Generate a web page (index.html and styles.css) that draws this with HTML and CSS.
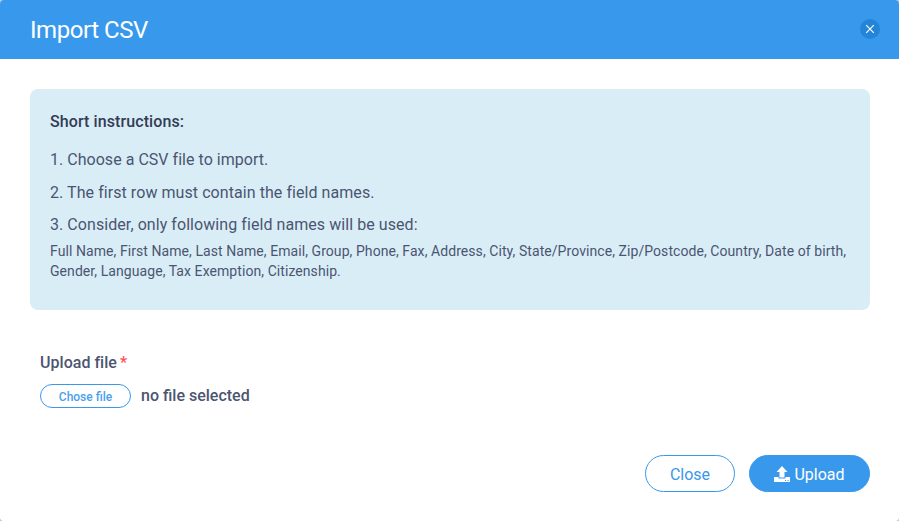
FILE: index.html
```html
<!DOCTYPE html>
<html lang="en">
<head>
<meta charset="utf-8">
<title>Import CSV</title>
<link rel="stylesheet" href="styles.css">
</head>
<body>
<section class="modal">
  <header class="modal-header">
    <h1>Import CSV</h1>
    <button class="dismiss" aria-label="Close"><svg width="10" height="10" viewBox="0 0 10 10"><path d="M1.200 1.200l7.600 7.600M8.800 1.200l-7.600 7.600"/></svg></button>
  </header>
  <main class="modal-body">
    <div class="info">
      <h2>Short instructions:</h2>
      <p>1. Choose a CSV file to import.</p>
      <p class="wide">2. The first row must contain the field names.</p>
      <p class="wide">3. Consider, only following field names will be used:</p>
      <small>Full Name, First Name, Last Name, Email, Group, Phone, Fax, Address, City, State/Province, Zip/Postcode, Country, Date of birth, Gender, Language, Tax Exemption, Citizenship.</small>
    </div>
    <div class="field">
      <div class="label">Upload file<span class="required">*</span></div>
      <div class="picker"><button class="choose">Chose file</button><span class="filename">no file selected</span></div>
    </div>
  </main>
  <footer class="modal-footer">
    <button class="btn">Close</button>
    <button class="btn primary"><svg width="16" height="16" viewBox="0 0 16 16"><path d="M8 0l5.5 6H10.5V11.5H5.500V6H2.500zM0 11h4.500v1.500h7V11H16v5H0zM11 14v1h1v-1zM13.500 14v1h1v-1z" fill-rule="evenodd"/></svg>Upload</button>
  </footer>
</section>
</body>
</html>
```
FILE: styles.css
```css
* { box-sizing: border-box; }
body { margin: 0; background: #c3c7d0; font-family: Roboto, sans-serif; color: #4b5570; }
h1, h2, p { margin: 0; }
button { font-family: inherit; cursor: pointer; }
.modal { height: 521px; overflow: hidden; background: #fff; border-radius: 4px; }
.modal-header { display: flex; align-items: center; justify-content: space-between; height: 59px; padding: 0 19px 0 30px; background: #3898ec; color: #fff; }
h1 { font-size: 24px; font-weight: 400; line-height: 30px; letter-spacing: -0.45px; }
.dismiss { display: flex; align-items: center; justify-content: center; width: 20px; height: 20px; margin-bottom: 1px; padding: 0; border: 0; border-radius: 50%; background: #2484d8; }
.dismiss path { stroke: #fff; stroke-width: 1.2; }
.modal-body { padding: 30px 29px 0 30px; }
.info { height: 221px; padding: 21px 20px 20px; border-radius: 8px; background: #d9edf7; }
.info h2 { margin-bottom: 14px; font-size: 16px; font-weight: 500; line-height: 24px; letter-spacing: 0.09px; color: #333c54; }
.info p { margin-bottom: 8.5px; font-size: 16px; line-height: 24px; letter-spacing: 0.03px; }
.info .wide { letter-spacing: 0.065px; }
.info p:last-of-type { margin-bottom: 4px; }
.info small { display: block; font-size: 14px; line-height: 20px; letter-spacing: 0.07px; }
.field { padding: 41px 10px 0; }
.label { font-size: 16px; font-weight: 500; line-height: 24px; letter-spacing: 0.03px; }
.required { margin-left: 3px; color: #ff4d5a; }
.picker { display: flex; align-items: center; gap: 10px; margin-top: 9px; }
.choose { width: 91px; height: 24px; padding: 1px 0 0; border: 1px solid #3898ec; border-radius: 12px; background: #fff; color: #4a9fee; font-size: 12px; font-weight: 500; }
.filename { font-size: 16px; font-weight: 500; line-height: 24px; }
.modal-footer { display: flex; justify-content: flex-end; gap: 14px; padding: 47px 29px 0; }
.btn { display: flex; align-items: center; justify-content: center; gap: 4px; width: 90px; height: 37px; padding: 2px 0 0; border: 1px solid #3898ec; border-radius: 19px; background: #fff; color: #3898ec; font-size: 16px; }
.primary { width: 121px; background: #3898ec; color: #fff; }
.primary svg { margin-bottom: 1px; fill: #fff; }
```
